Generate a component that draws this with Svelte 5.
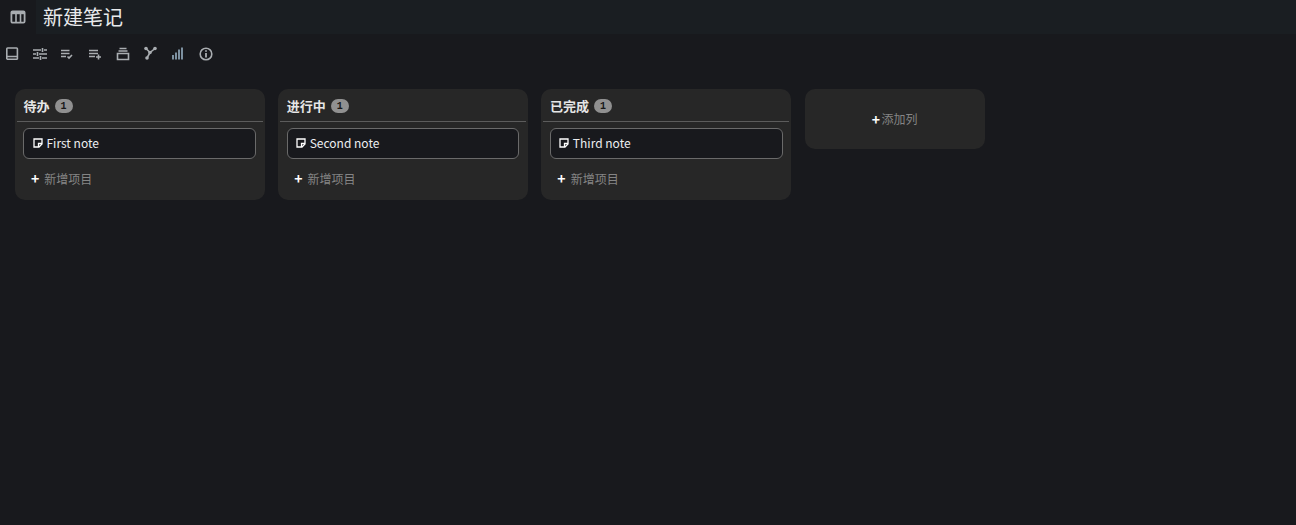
<script>
	const columns = [
		{ title: '待办', note: 'First note' },
		{ title: '进行中', note: 'Second note' },
		{ title: '已完成', note: 'Third note' }
	];
</script>

<div class="page">
	<header class="titlebar">
		<button class="view-btn" aria-label="kanban">
			<svg width="16" height="14" viewBox="0 0 16 14" fill="none" stroke="#a9adb1" stroke-width="1.800">
				<rect x="1.400" y="1.400" width="13.200" height="11.200" rx="1.200" />
				<path d="M1 3h14" stroke-width="2.400" />
				<path d="M6 3v9.500M10.500 3v9.500" stroke-width="1.600" />
			</svg>
		</button>
		<div class="title">新建笔记</div>
	</header>

	<div class="toolbar">
		<svg class="tool" viewBox="0 0 14 14"><path d="M1.800 12.200V1.800a.8.800 0 0 1 .8-.8h9a.8.800 0 0 1 .8.800v10.400M1.800 9.500h10.800M1.800 12.300h10.800" /></svg>
		<svg class="tool" viewBox="0 0 14 14"><path d="M0 3h8M11 3h3M9.500 1v4M0 7h3M6 7h8M4.500 5v4M0 11h6M9 11h5M7.500 9v4" /></svg>
		<svg class="tool" viewBox="0 0 14 14"><path d="M1 3.500h8.500M1 6.500h8.500M1 9.500h5M7.500 9.500l1.500 1.500 3-3" /></svg>
		<svg class="tool" viewBox="0 0 14 14"><path d="M1 3.500h9M1 6.500h9M1 9.500h6M10.500 7.500v5M8 10h5" /></svg>
		<svg class="tool" viewBox="0 0 14 14"><path d="M3.500 1.500h7M2.500 4h9M1.500 6.500h11v6h-11z" /></svg>
		<svg class="tool" viewBox="0 0 14 14">
			<path d="M3 1.500L7 5.500L12 1.500M7 5.500L4 11" />
			<circle class="dot" cx="3" cy="1.500" r="1.800" />
			<circle class="dot" cx="12" cy="1.500" r="1.800" />
			<circle class="dot" cx="7" cy="5.500" r="1.800" />
			<circle class="dot" cx="4" cy="11" r="1.800" />
		</svg>
		<svg class="tool bars" viewBox="0 0 14 14"><path d="M2 12.500v-4.500M5 12.500v-7M8 12.500v-10M11 12.500v-12" /></svg>
		<svg class="tool" viewBox="0 0 14 14">
			<circle cx="7" cy="7" r="5.800" />
			<path d="M7 6v4.500M7 3.200v1.600" stroke-width="1.800" />
		</svg>
	</div>

	<main class="board">
		{#each columns as col}
			<section class="column">
				<div class="col-head">
					<span class="col-title">{col.title}</span>
					<span class="badge">1</span>
				</div>
				<div class="col-body">
					<div class="card">
						<svg class="note-icon" width="10" height="10" viewBox="0 0 10 10" fill="none" stroke="#fff" stroke-width="1.300">
							<path d="M1 1h8v5L6 9H1z" />
							<path d="M9 5.500H5.500V9" />
						</svg>
						<span>{col.note}</span>
					</div>
					<div class="add-item">
						<span class="plus">+</span>
						<span>新增项目</span>
					</div>
				</div>
			</section>
		{/each}
		<div class="add-col">
			<span class="plus">+</span><span>添加列</span>
		</div>
	</main>
</div>

<style>
	:global(body) {
		margin: 0;
		background: #18191d;
	}
	.page {
		height: 525px;
		overflow: hidden;
		background: #18191d;
		color: #fff;
		font-family: 'Noto Sans CJK SC', 'Noto Sans', sans-serif;
	}
	.titlebar {
		display: flex;
		align-items: center;
		height: 34px;
		background: #1a1e22;
	}
	.view-btn {
		display: flex;
		align-items: center;
		justify-content: center;
		width: 36px;
		height: 34px;
		padding: 0;
		border: none;
		background: #18191d;
	}
	.title {
		margin-left: 7px;
		font-size: 20px;
		line-height: 34px;
		color: #e8eaec;
	}
	.toolbar {
		display: flex;
		align-items: center;
		gap: 13.700px;
		height: 39px;
		padding-left: 5px;
	}
	.tool {
		width: 14px;
		height: 14px;
		overflow: visible;
		fill: none;
		stroke: #a9adb1;
		stroke-width: 1.600;
	}
	.tool .dot {
		fill: #a9adb1;
		stroke: none;
	}
	.tool.bars {
		stroke: #8fa6b8;
		stroke-width: 1.700;
	}
	.board {
		display: flex;
		align-items: flex-start;
		gap: 13.200px;
		padding: 16px 15px 0;
	}
	.column {
		width: 250px;
		height: 111px;
		box-sizing: border-box;
		padding: 0 2px;
		background: #272727;
		border-radius: 10px;
	}
	.col-head {
		display: flex;
		align-items: center;
		gap: 5px;
		height: 33px;
		box-sizing: border-box;
		padding: 0 0 0 6.600px;
		border-bottom: 1px solid #5c5c5c;
	}
	.col-title {
		font-size: 13px;
		font-weight: 700;
		color: #e6e6e6;
	}
	.badge {
		width: 18px;
		height: 14px;
		margin-top: 2px;
		border-radius: 7px;
		background: #909090;
		color: #181818;
		font-size: 10px;
		font-weight: 700;
		line-height: 15px;
		text-align: center;
		font-family: 'Liberation Mono', monospace;
	}
	.col-body {
		padding: 6px 6.800px 0 6.400px;
	}
	.card {
		display: flex;
		align-items: center;
		gap: 3.500px;
		height: 31px;
		box-sizing: border-box;
		padding: 0 0 2px 8.600px;
		background: #18191d;
		border: 1px solid #6a6a6a;
		border-radius: 6px;
		font-size: 12px;
		color: #eceef0;
	}
	.add-item {
		display: flex;
		align-items: center;
		gap: 5px;
		margin-top: 8px;
		padding-left: 7.600px;
		height: 22px;
		font-size: 12px;
		color: #858585;
	}
	.plus {
		color: #fff;
		font-size: 14px;
		font-weight: 700;
		line-height: 1;
	}
	.add-col {
		display: flex;
		align-items: center;
		justify-content: center;
		gap: 1.500px;
		width: 180px;
		height: 60px;
		padding-bottom: 1px;
		box-sizing: border-box;
		background: #272727;
		border-radius: 10px;
		font-size: 12px;
		color: #858585;
	}
</style>
